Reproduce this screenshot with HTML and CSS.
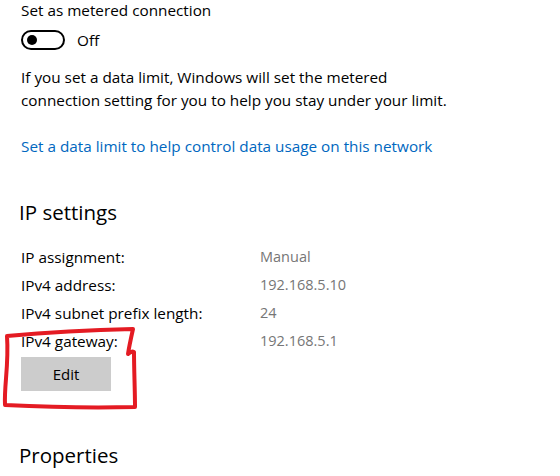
FILE: index.html
```html
<!DOCTYPE html>
<html>
<head>
<meta charset="utf-8">
<link rel="stylesheet" href="styles.css">
</head>
<body>
<div class="page">
  <div class="title">Set as metered connection</div>
  <div class="toggle-row">
    <span class="toggle"><span class="knob"></span></span>
    <span class="toggle-label">Off</span>
  </div>
  <p class="para">If you set a data limit, Windows will set the metered<br>connection setting for you to help you stay under your limit.</p>
  <a class="link" href="#">Set a data limit to help control data usage on this network</a>
  <h2 class="heading first">IP settings</h2>
  <div class="rows">
    <div class="row"><span class="label">IP assignment:</span><span class="value">Manual</span></div>
    <div class="row"><span class="label">IPv4 address:</span><span class="value">192.168.5.10</span></div>
    <div class="row"><span class="label">IPv4 subnet prefix length:</span><span class="value">24</span></div>
    <div class="row"><span class="label">IPv4 gateway:</span><span class="value">192.168.5.1</span></div>
  </div>
  <button class="btn">Edit</button>
  <h2 class="heading second">Properties</h2>
  <svg class="annot" width="560" height="476" viewBox="0 0 560 476">
    <path d="M7 336 C40 333 90 330 133 329 C131 338 129 347 128 354 C130 352 132 351 134 352 C134 370 135 390 135 407 C95 408 45 407 5 405 C4 385 9 365 7 336" fill="none" stroke="#e41b23" stroke-width="4" stroke-linecap="round" stroke-linejoin="round"/>
  </svg>
</div>
</body>
</html>
```
FILE: styles.css
```css
html, body {
  margin: 0;
  padding: 0;
  background: #ffffff;
}
.page {
  position: relative;
  width: 560px;
  height: 476px;
  overflow: hidden;
  padding-left: 21px;
  box-sizing: border-box;
  font-family: "Open Sans", "Noto Sans", sans-serif;
  font-size: 15.3px;
  color: #000000;
}
.title {
  line-height: 20px;
}
.toggle-row {
  margin-top: 10px;
  height: 20px;
  display: flex;
  align-items: center;
}
.toggle {
  box-sizing: border-box;
  width: 44px;
  height: 20px;
  border: 2px solid #000;
  border-radius: 10px;
  display: flex;
  align-items: center;
  padding-left: 4px;
}
.knob {
  width: 10px;
  height: 10px;
  border-radius: 50%;
  background: #000;
}
.toggle-label {
  margin-left: 12px;
}
.para {
  margin: 16px 0 0;
  line-height: 23px;
}
.link {
  display: block;
  margin-top: 23px;
  line-height: 22px;
  color: #0067c0;
  text-decoration: none;
}
.heading {
  margin: 0;
  font-weight: normal;
  font-size: 20.5px;
  line-height: 28px;
  margin-left: -2px;
}
.heading.first {
  margin-top: 41px;
}
.heading.second {
  margin-top: 50px;
}
.rows {
  margin-top: 17px;
}
.row {
  display: flex;
  line-height: 28px;
}
.label {
  width: 239px;
}
.value {
  color: #767676;
  font-size: 14.5px;
}
.btn {
  display: block;
  margin-top: 2px;
  width: 90px;
  height: 34px;
  border: none;
  background: #cccccc;
  font-family: inherit;
  font-size: 15px;
  color: #000;
  padding: 0;
}
.annot {
  position: absolute;
  left: 0;
  top: 0;
  pointer-events: none;
}
```
